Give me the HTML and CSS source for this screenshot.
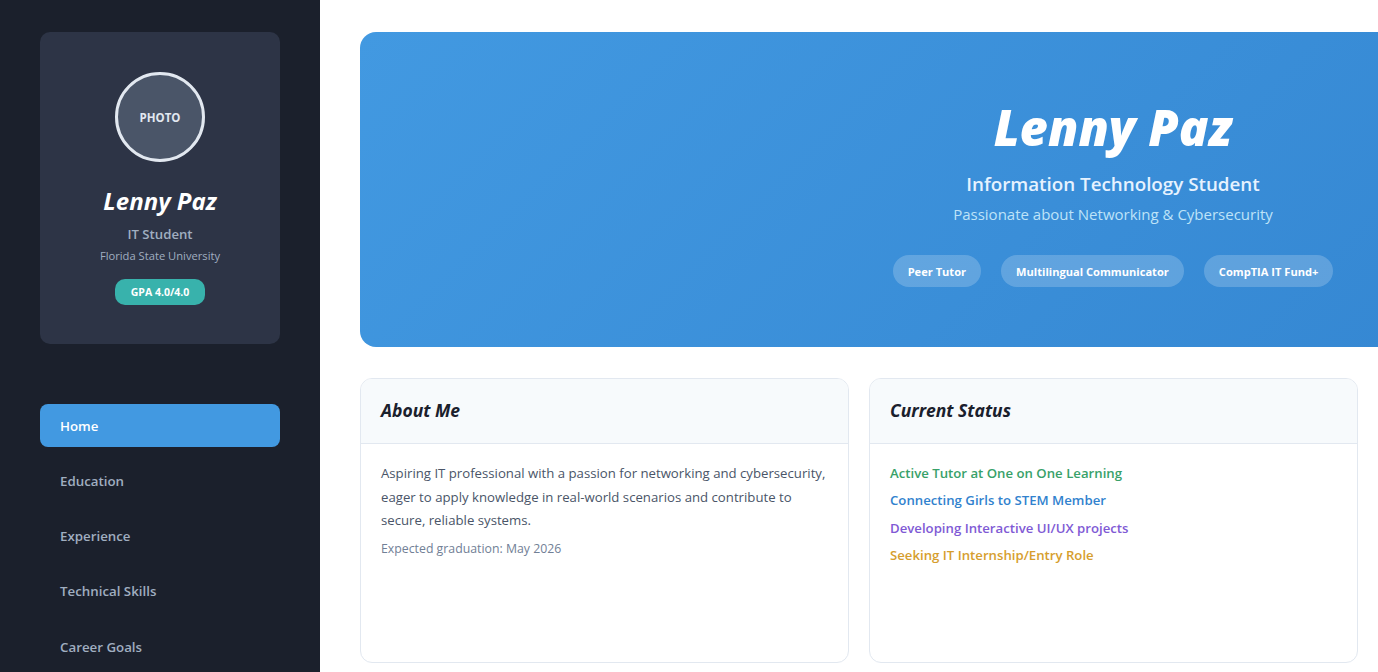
FILE: index.html
```html
<!DOCTYPE html>
<html lang="en">
<head>
<meta charset="utf-8">
<title>Lenny Paz</title>
<link rel="stylesheet" href="styles.css">
</head>
<body>
<div class="layout">
  <aside class="sidebar">
    <div class="profile">
      <div class="photo">PHOTO</div>
      <h2 class="profile-name">Lenny Paz</h2>
      <div class="profile-role">IT Student</div>
      <div class="profile-school">Florida State University</div>
      <div class="gpa">GPA 4.0/4.0</div>
    </div>
    <nav class="nav">
      <a class="nav-item active">Home</a>
      <a class="nav-item">Education</a>
      <a class="nav-item">Experience</a>
      <a class="nav-item">Technical Skills</a>
      <a class="nav-item">Career Goals</a>
    </nav>
  </aside>
  <main class="main">
    <section class="hero">
      <h1 class="hero-title">Lenny Paz</h1>
      <div class="hero-sub">Information Technology Student</div>
      <div class="hero-tag">Passionate about Networking &amp; Cybersecurity</div>
      <div class="hero-badges">
        <span class="hero-badge">Peer Tutor</span>
        <span class="hero-badge">Multilingual Communicator</span>
        <span class="hero-badge">CompTIA IT Fund+</span>
      </div>
    </section>
    <div class="cards">
      <section class="card">
        <div class="card-head"><h3>About Me</h3></div>
        <div class="card-body">
          <p class="about">Aspiring IT professional with a passion for networking and cybersecurity, eager to apply knowledge in real-world scenarios and contribute to secure, reliable systems.</p>
          <p class="grad">Expected graduation: May 2026</p>
        </div>
      </section>
      <section class="card">
        <div class="card-head"><h3>Current Status</h3></div>
        <div class="card-body status">
          <div class="st green">Active Tutor at One on One Learning</div>
          <div class="st blue">Connecting Girls to STEM Member</div>
          <div class="st purple">Developing Interactive UI/UX projects</div>
          <div class="st orange">Seeking IT Internship/Entry Role</div>
        </div>
      </section>
    </div>
  </main>
</div>
</body>
</html>
```
FILE: styles.css
```css
* { box-sizing: border-box; }
html, body { margin: 0; padding: 0; }
body {
  font-family: "Open Sans", "Noto Sans", sans-serif;
  background: #ffffff;
  overflow: hidden;
  height: 672px;
}
.layout { display: flex; height: 672px; }
.sidebar {
  width: 320px;
  flex: none;
  background: #1b202c;
  padding: 32px 40px;
}
.profile {
  background: #2d3446;
  border-radius: 10px;
  height: 312px;
  padding-top: 40px;
  display: flex;
  flex-direction: column;
  align-items: center;
}
.photo {
  width: 90px; height: 90px;
  border-radius: 50%;
  border: 3px solid #e2e8f0;
  background: #4a5568;
  color: #e2e8f0;
  font-size: 11.5px;
  font-weight: 700;
  display: flex; align-items: center; justify-content: center;
}
.profile-name {
  margin: 24px 0 0;
  color: #fff;
  font-size: 24px;
  font-weight: 700;
  font-style: italic;
  line-height: 30px;
}
.profile-role {
  margin-top: 9px;
  color: #a0aec0;
  font-size: 13.2px;
  font-weight: 600;
  line-height: 18px;
}
.profile-school {
  margin-top: 5px;
  color: #a0aec0;
  font-size: 11.2px;
  line-height: 16px;
}
.gpa {
  margin-top: 15px;
  background: #38b2ac;
  color: #fff;
  font-size: 10.5px;
  font-weight: 700;
  height: 26px;
  padding: 0 16px;
  border-radius: 10px;
  display: flex; align-items: center;
}
.nav { margin-top: 60px; display: flex; flex-direction: column; gap: 12.3px; }
.nav-item {
  height: 43px;
  display: flex; align-items: center;
  padding: 0 20px;
  border-radius: 8px;
  color: #a0aec0;
  font-size: 13.3px;
  font-weight: 600;
}
.nav-item.active { background: #4299e1; color: #fff; }
.main {
  flex: 1;
  min-width: 0;
  padding: 32px 20px 0 40px;
  overflow: hidden;
}
.hero {
  width: 1506px;
  height: 315px;
  border-radius: 16px;
  background: linear-gradient(135deg, #4299e1 0%, #3182ce 100%);
  display: flex; flex-direction: column; align-items: center;
  padding-top: 64px;
  color: #fff;
}
.hero-title {
  margin: 0;
  font-size: 49px;
  font-weight: 800;
  font-style: italic;
  line-height: 62px;
}
.hero-sub {
  margin-top: 12px;
  font-size: 18.8px;
  font-weight: 600;
  color: #e6f2ff;
  line-height: 28px;
}
.hero-tag {
  margin-top: 5px;
  font-size: 15px;
  color: #bee3f8;
  line-height: 22px;
}
.hero-badges { margin-top: 30px; display: flex; gap: 20px; }
.hero-badge {
  height: 32px;
  padding: 0 15px;
  border-radius: 16px;
  background: rgba(255,255,255,0.2);
  font-size: 11.1px;
  font-weight: 700;
  display: flex; align-items: center;
}
.cards {
  margin-top: 31px;
  display: grid;
  grid-template-columns: 1fr 1fr;
  gap: 20px;
}
.card {
  height: 285px;
  border: 1px solid #e2e8f0;
  border-radius: 12px;
  overflow: hidden;
}
.card-head {
  height: 65px;
  background: #f7fafc;
  border-bottom: 1px solid #e2e8f0;
  display: flex; align-items: center;
  padding: 0 20px;
}
.card-head h3 {
  margin: 0;
  font-size: 17.5px;
  font-weight: 700;
  font-style: italic;
  color: #1a202c;
  padding-bottom: 2px;
}
.card-body { padding: 18px 20px; }
.about {
  margin: 0;
  font-size: 13.2px;
  line-height: 23.6px;
  color: #4a5568;
}
.grad { margin: 7px 0 0; font-size: 12.3px; color: #718096; }
.status { padding-top: 20px; display: flex; flex-direction: column; gap: 8.3px; }
.st { font-size: 13.2px; font-weight: 600; line-height: 19px; }
.green { color: #38a169; }
.blue { color: #3182ce; }
.purple { color: #805ad5; }
.orange { color: #d69e2e; }
```
